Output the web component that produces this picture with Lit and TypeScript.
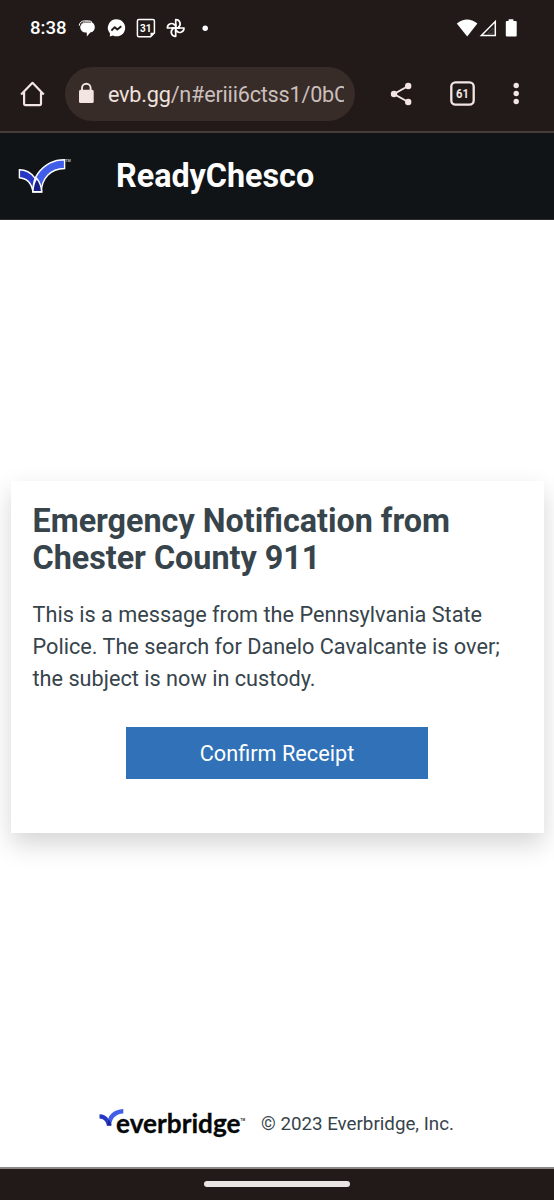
import { LitElement, html, css, svg } from "lit";
import { customElement } from "lit/decorators.js";

@customElement("status-bar")
class StatusBar extends LitElement {
  static styles = css`
    :host { display: flex; align-items: center; height: 56px; padding-left: 30px; box-sizing: border-box; color: #fff; }
    .time { width: 48px; font: 500 18.600px/56px Roboto, sans-serif; white-space: nowrap; }
    svg { display: block; flex: none; }
    .end { margin-left: auto; }
  `;
  render() {
    return html`
      <span class="time">8:38</span>
      <svg width="140" height="24" viewBox="78 16 140 24" fill="#fff">
        <path d="M85.500 21.600h4a5.300 5.300 0 0 1 5.300 5.300v.4a5.300 5.300 0 0 1-4.600 5.200l-3.300 4-.2-4h-1.200a5.300 5.300 0 0 1-5.300-5.300v-.3a5.300 5.300 0 0 1 5.300-5.300z" />
        <path d="M79.200 25.700c.3-3 2.300-4.800 5-4.800h4.300c1.400 0 2.500.4 3.300 1" fill="none" stroke="#fff" stroke-width="1" />
        <path d="M80.500 26c.4-2.300 2-3.500 4.500-3.500h6" fill="none" stroke="#211a18" stroke-width=".5" />
        <path d="M116.500 19.300a8.700 8.500 0 1 1-3.700 16.200l-3 .9.200-3a8.500 8.500 0 0 1 6.500-14.100z" />
        <path d="M111.400 30.700l3.300-3.500 2.600 2.300 4-3.200" fill="none" stroke="#211a18" stroke-width="1.900" stroke-linejoin="round" />
        <path d="M138.900 19.500h14a1.500 1.500 0 0 1 1.500 1.500v12l-3.800 3.700h-11.700a1.500 1.500 0 0 1-1.500-1.500V21a1.500 1.500 0 0 1 1.500-1.500z" fill="none" stroke="#fff" stroke-width="1.500" />
        <path d="M150.500 37v-4.200h4.200z" />
        <text x="145.700" y="31.900" text-anchor="middle" font-family="Roboto, sans-serif" font-size="11.500" font-weight="700" textLength="11.500" lengthAdjust="spacingAndGlyphs">31</text>
        <g fill="none" stroke="#fff" stroke-width="1.700" stroke-linejoin="round">
          ${[0, 90, 180, 270].map((a) => svg`<path transform="rotate(${a} 175.700 28)" d="M175.700 28V19.700a4.350 4.150 0 0 1 2.500 7.600" />`)}
          ${[0, 90, 180, 270].map((a) => svg`<path transform="rotate(${a} 175.700 28)" d="M175.700 28h4.300" />`)}
        </g>
        <circle cx="205.200" cy="28.200" r="2.700" />
      </svg>
      <svg class="end" width="104" height="24" viewBox="450 16 104 24" fill="#fff">
        <path d="M456.800 23.400q10.300-8 20.600 0L467.200 36.500z" />
        <path d="M495.300 21.500v14h-13.900z" fill="none" stroke="#fff" stroke-width="1.500" />
        <path d="M493 28v5.300h-5z" fill="none" stroke="#776f6d" stroke-width=".5" />
        <path d="M508.600 19.200h4.800v1.900h2.300a1 1 0 0 1 1 1v13.500a1 1 0 0 1-1 1h-8.900a1 1 0 0 1-1-1V22.100a1 1 0 0 1 1-1h1.800z" />
      </svg>
    `;
  }
}

@customElement("browser-bar")
class BrowserBar extends LitElement {
  static styles = css`
    :host { display: flex; align-items: center; height: 77px; box-sizing: border-box; border-bottom: 2px solid #463d3b; }
    svg { display: block; flex: none; }
    .home { margin: 0 15px 0 18px; }
    .address { display: flex; align-items: center; width: 290px; height: 54px; border-radius: 27px; background: #382c29; box-sizing: border-box; padding: 0 11px 0 12px; }
    .url { flex: 1; margin-left: 11px; padding-top: 3px; overflow: hidden; white-space: nowrap; font: 400 21.6px/32px Roboto, sans-serif; letter-spacing: -0.2px; color: #cbbfbc; }
    .host { color: #efe2df; }
    .actions { margin-left: auto; }
  `;
  render() {
    return html`
      <svg class="home" width="32" height="32" viewBox="18 78 32 32" fill="none" stroke="#f3e5e2" stroke-width="2.200">
        <path d="M21.100 94.400L32.500 82.800 43.800 94.400M24.100 91.800v12.300q0 1 1 1h14.900q1 0 1-1V91.800" stroke-linejoin="round" />
      </svg>
      <div class="address">
        <svg width="20" height="24" viewBox="77 82 20 24">
          <path d="M82 91v-3a4.300 4.300 0 0 1 8.600 0v3" fill="none" stroke="#f3e5e2" stroke-width="1.900" />
          <rect x="79" y="89.800" width="14.700" height="13.200" rx="1.600" fill="#f3e5e2" />
        </svg>
        <div class="url"><span class="host">evb.gg</span>/n#eriii6ctss1/0bC</div>
      </div>
      <svg class="actions" width="174" height="32" viewBox="380 78 174 32" fill="#f3e5e2">
        <path d="M408.200 86L394 94l14.200 8" fill="none" stroke="#f3e5e2" stroke-width="2" />
        <circle cx="408.200" cy="86" r="3.200" /><circle cx="394" cy="94" r="3.200" /><circle cx="408.200" cy="102" r="3.200" />
        <rect x="451.300" y="82.300" width="22.400" height="22.400" rx="4.200" fill="none" stroke="#f3e5e2" stroke-width="2.300" />
        <text x="462.400" y="98.300" text-anchor="middle" font-family="Roboto, sans-serif" font-size="13.500" font-weight="700" textLength="12.800" lengthAdjust="spacingAndGlyphs">61</text>
        <circle cx="516.200" cy="85.500" r="2.700" /><circle cx="516.200" cy="93.500" r="2.700" /><circle cx="516.200" cy="101.500" r="2.700" />
      </svg>
    `;
  }
}

@customElement("app-root")
class AppRoot extends LitElement {
  static styles = css`
    :host { display: flex; flex-direction: column; width: 554px; height: 1200px; overflow: hidden; background: #fff; font-family: Roboto, sans-serif; color: #37444b; }
    svg { display: block; flex: none; }
    .chrome { background: #211a18; }
    .masthead { display: flex; align-items: center; height: 87px; box-sizing: border-box; background: #101416; color: #fff; padding-left: 16px; border-bottom: 1px solid #2d3032; }
    .masthead svg { margin-right: 44px; }
    .title { font-size: 32.300px; line-height: 40px; font-weight: 700; white-space: nowrap; }
    .card { margin: 261px 10px 0 11px; height: 352px; box-sizing: border-box; padding: 22px 20px 0 21.500px; background: #fff; box-shadow: 0 11px 24px rgba(0, 0, 0, 0.17); }
    .heading { margin: 0; font-size: 32.300px; line-height: 37px; font-weight: 700; white-space: nowrap; }
    .message { margin: 22px 0 0; font-size: 21.700px; line-height: 32px; white-space: nowrap; }
    .confirm { display: block; width: 302px; height: 52px; margin: 32px 0 0 93.500px; padding: 1px 0 0; border: 0; background: #3071b7; color: #fff; font: 400 21.700px/51px Roboto, sans-serif; }
    .footer { display: flex; align-items: center; height: 36px; margin: auto 0 26px 98px; font-size: 18.750px; }
    .copyright { margin-left: 15px; padding-top: 2px; white-space: nowrap; }
    .nav { display: flex; justify-content: center; height: 33px; box-sizing: border-box; border-top: 2px solid #8b8786; background: #211a18; padding-top: 12px; }
    .handle { width: 146px; height: 6px; border-radius: 3px; background: #e9e5e4; }
  `;

  render() {
    return html`
      <header class="chrome"><status-bar></status-bar><browser-bar></browser-bar></header>
      <div class="masthead">
        <svg width="56" height="40" viewBox="16 156 56 40">
          <g stroke="#fff" stroke-width="1.400">
            <path d="M19.400 169.700q9.400 0 15.300 8.100 5.800 6.300 7 13.900h-8.800q-2-13.100-13.500-14z" fill="#2637c5" />
            <path d="M64.600 159.800v8.700c-14.500.2-22.800 10.200-23.300 23.200h-8.400c0-8.700 1.300-13.300 5-18.200 6.700-9 16-13.700 26.700-13.700z" fill="#405ee8" />
            <path d="M36.600 178.300c3.200 3.900 4.800 8.600 5.100 13.400h-8.800c.2-5.300 1.300-9.400 3.700-13.400z" fill="#171f86" />
          </g>
          <text x="65.300" y="162.100" font-family="Roboto, sans-serif" font-size="3.700" font-weight="700" fill="#b8bbbd">TM</text>
        </svg>
        <div class="title">ReadyChesco</div>
      </div>
      <main class="card">
        <h1 class="heading">Emergency Notification from<br />Chester County 911</h1>
        <p class="message">This is a message from the Pennsylvania State<br />Police. The search for Danelo Cavalcante is over;<br />the subject is now in custody.</p>
        <button class="confirm">Confirm Receipt</button>
      </main>
      <footer class="footer">
        <svg width="148" height="36" viewBox="98 1105 148 36">
          <path d="M99.500 1114.300c4 0 6.900 1.800 9.100 5 2 2.600 2.600 4.300 2.800 6.200h-4.500c-.7-4.300-3.300-6.700-7.400-7z" fill="#2637c5" />
          <path d="M123.300 1109v4.400c-7.700.5-11.800 5-12.100 12.100h-4.300c.1-9.700 6.300-16.100 16.400-16.500z" fill="#405ee8" />
          <path d="M108.700 1119.300q2.500 3.200 2.700 6.200h-4.500q.2-3.700 1.800-6.200z" fill="#1d2697" />
          <text x="116" y="1132.700" font-family="Lato, sans-serif" font-size="26.500" font-weight="700" textLength="124.500" lengthAdjust="spacingAndGlyphs" fill="#050708" stroke="#050708" stroke-width=".3">everbridge</text>
          <text x="240.600" y="1121" font-family="Roboto, sans-serif" font-size="3" font-weight="700" fill="#222">TM</text>
        </svg>
        <span class="copyright">© 2023 Everbridge, Inc.</span>
      </footer>
      <div class="nav"><div class="handle"></div></div>
    `;
  }
}
